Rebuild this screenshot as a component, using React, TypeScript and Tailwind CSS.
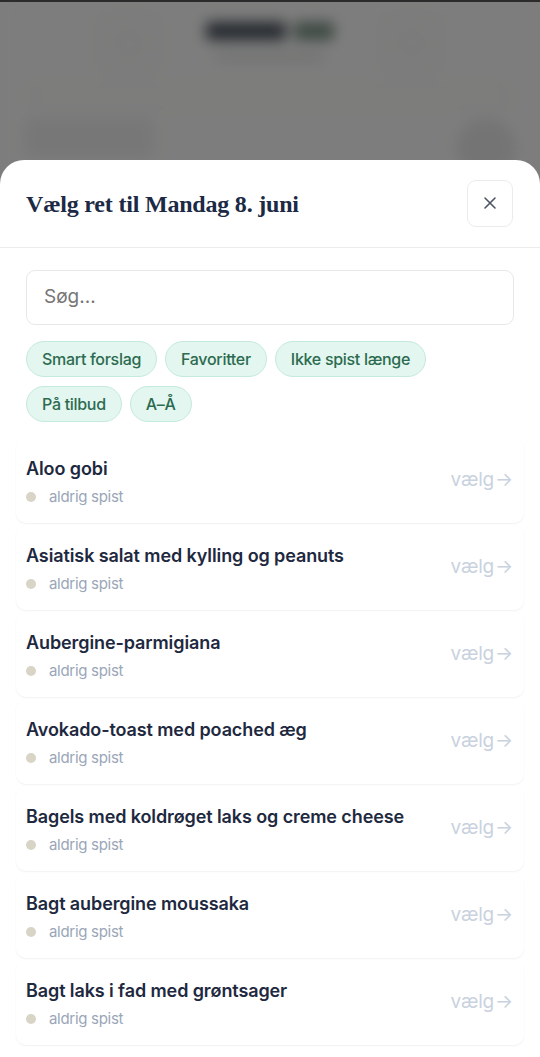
import React from 'react';

const dishes = [
  'Aloo gobi',
  'Asiatisk salat med kylling og peanuts',
  'Aubergine-parmigiana',
  'Avokado-toast med poached æg',
  'Bagels med koldrøget laks og creme cheese',
  'Bagt aubergine moussaka',
  'Bagt laks i fad med grøntsager',
];

const filters = ['Smart forslag', 'Favoritter', 'Ikke spist længe', 'På tilbud', 'A–Å'];

function BackgroundPage() {
  // blurred page behind the sheet
  return (
    <div className="h-[170px] bg-[#fbfbfa] blur-[7px]">
      <div className="flex items-start justify-between px-[100px] pt-[14px]">
        <div className="w-[58px] h-[58px] rounded-xl border-2 border-[#e6e6e6] flex items-center justify-center">
          <div className="w-6 h-6 rounded-md border-2 border-[#dddddd]" />
        </div>
        <div className="flex flex-col items-center gap-3 pt-2">
          <div className="flex gap-2">
            <div className="w-[80px] h-[18px] rounded bg-[#4a525c]" />
            <div className="w-[40px] h-[18px] rounded bg-[#7a9284]" />
          </div>
          <div className="w-[110px] h-[10px] rounded bg-[#e6e6e6]" />
        </div>
        <div className="w-[58px] h-[58px] rounded-xl border-2 border-[#e6e6e6] flex items-center justify-center">
          <div className="w-6 h-6 rounded-md border-2 border-[#dddddd]" />
        </div>
      </div>
      <div className="mx-[30px] mt-[14px] h-[22px] rounded-lg border-2 border-[#eeeeee]" />
      <div className="flex justify-between px-[24px] mt-[10px]">
        <div className="w-[130px] h-[40px] rounded-lg bg-[#efefef]" />
        <div className="w-[60px] h-[60px] rounded-full bg-[#e9e9e9]" />
      </div>
    </div>
  );
}

export default function App() {
  return (
    <div className="relative h-[1057px] w-[540px] overflow-hidden bg-[#fbfbfa] font-['Inter',sans-serif]">
      <BackgroundPage />
      <div className="absolute inset-0 bg-black/50" />
      <div className="absolute top-0 left-0 right-0 h-[2px] bg-[#2b2b2b]" />

      {/* Sheet */}
      <div className="absolute left-0 right-0 top-[160px] bottom-0 bg-white rounded-t-[24px] overflow-hidden flex flex-col">
        <div className="h-[88px] shrink-0 flex items-center justify-between pl-[26px] pr-[27px] border-b border-[#ececec]">
          <h2 className="font-['Liberation_Serif',serif] font-bold text-[24px] text-[#1c2a45] tracking-[-0.2px]">
            Vælg ret til Mandag 8. juni
          </h2>
          <button
            type="button"
            className="w-[46px] h-[47px] rounded-[9px] border border-[#ebebeb] flex items-center justify-center text-[#4b5563] mt-[-1px]"
          >
            <svg width="16" height="16" viewBox="0 0 16 16" fill="none" stroke="currentColor" strokeWidth="1.6" strokeLinecap="round">
              <path d="M3 3l10 10M13 3L3 13" />
            </svg>
          </button>
        </div>

        <div className="px-[26px] pt-[22px]">
          <div className="h-[55px] rounded-[9px] border border-[#e8e8e8] flex items-center pl-[17px] text-[19px] text-[#767676]">
            Søg...
          </div>
          <div className="flex flex-wrap gap-x-[8px] gap-y-[9px] mt-[16px]">
            {filters.map((f) => (
              <span
                key={f}
                className="h-[36px] px-[15px] rounded-full bg-[#e3f6ef] border border-[#c4eadb] text-[#2c6b4f] text-[16px] font-medium flex items-center tracking-[-0.3px]"
              >
                {f}
              </span>
            ))}
          </div>
        </div>

        <div className="flex flex-col gap-[2px] px-[16px] mt-[16px]">
          {dishes.map((d) => (
            <div
              key={d}
              className="h-[85px] shrink-0 rounded-[10px] bg-white shadow-[0_1px_2px_rgba(0,0,0,0.06)] flex items-center justify-between pl-[10px] pr-[11px]"
            >
              <div className="flex flex-col gap-[6px] pt-[3px]">
                <div className="text-[18px] leading-[24px] font-semibold text-[#1e2940] tracking-[-0.1px]">{d}</div>
                <div className="flex items-center gap-[13px] h-[20px]">
                  <span className="w-[10px] h-[10px] rounded-full bg-[#d8d4c6]" />
                  <span className="text-[15px] text-[#9aa6b8] tracking-[-0.3px]">aldrig spist</span>
                </div>
              </div>
              <span className="text-[19px] text-[#c9d2de] tracking-[-0.2px] flex items-center gap-[1px]">
                vælg<span>→</span>
              </span>
            </div>
          ))}
        </div>
      </div>
    </div>
  );
}
